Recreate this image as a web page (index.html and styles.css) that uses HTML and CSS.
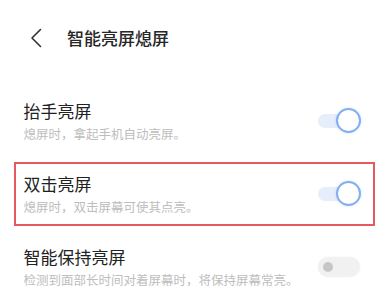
FILE: index.html
```html
<!DOCTYPE html>
<html lang="zh-CN">
<head>
<meta charset="utf-8">
<link rel="stylesheet" href="styles.css">
</head>
<body>
<div class="page">
  <header class="header">
    <svg class="back" width="12" height="20" viewBox="0 0 12 20"><path d="M10.5 1.5 L2 10 L10.5 18.5" fill="none" stroke="#333" stroke-width="1.6" stroke-linecap="round" stroke-linejoin="round"/></svg>
    <h1 class="title">智能亮屏熄屏</h1>
  </header>
  <div class="list">
    <div class="row">
      <div class="text">
        <div class="row-title">抬手亮屏</div>
        <div class="row-sub">熄屏时，拿起手机自动亮屏。</div>
      </div>
      <div class="toggle on"><span class="track"></span><span class="knob"></span></div>
    </div>
    <div class="row highlight">
      <div class="text">
        <div class="row-title">双击亮屏</div>
        <div class="row-sub">熄屏时，双击屏幕可使其点亮。</div>
      </div>
      <div class="toggle on"><span class="track"></span><span class="knob"></span></div>
    </div>
    <div class="row">
      <div class="text">
        <div class="row-title">智能保持亮屏</div>
        <div class="row-sub">检测到面部长时间对着屏幕时，将保持屏幕常亮。</div>
      </div>
      <div class="toggle off"><span class="track"></span><span class="dot"></span></div>
    </div>
  </div>
</div>
</body>
</html>
```
FILE: styles.css
```css
html, body {
  margin: 0;
  padding: 0;
  background: #ffffff;
}
body {
  font-family: "Noto Sans CJK SC", "Noto Sans", sans-serif;
  color: #222222;
}
.page {
  width: 389px;
  height: 305px;
  overflow: hidden;
}
.header {
  height: 76px;
  display: flex;
  align-items: center;
  padding-left: 30px;
}
.back {
  display: block;
}
.title {
  margin: 0 0 0 25px;
  font-size: 17px;
  font-weight: 500;
  line-height: 24px;
  color: #262626;
}
.list {
  margin-top: 13px;
  display: flex;
  flex-direction: column;
  gap: 9px;
}
.row {
  margin: 0 14px;
  height: 64px;
  box-sizing: border-box;
  border: 2.5px solid transparent;
  padding: 0 12px 0 7.5px;
  display: flex;
  align-items: center;
  justify-content: space-between;
}
.row.highlight {
  border-color: #e65a5f;
}
.row-title {
  font-size: 17px;
  line-height: 22px;
  color: #222222;
}
.row-sub {
  font-size: 12.5px;
  line-height: 18px;
  margin-top: 3px;
  color: #bdbdbd;
}
.toggle {
  position: relative;
  width: 43px;
  height: 26px;
  flex-shrink: 0;
}
.toggle.on .track {
  position: absolute;
  left: 0;
  top: 6px;
  width: 32px;
  height: 14px;
  border-radius: 7px;
  background: #e7eefb;
}
.toggle.on .knob {
  position: absolute;
  right: 0;
  top: 0;
  width: 25px;
  height: 25px;
  box-sizing: border-box;
  border-radius: 50%;
  border: 2.5px solid #84aef0;
  background: #ffffff;
  box-shadow: 0 0 3px rgba(132, 174, 240, 0.35);
}
.toggle.off .track {
  position: absolute;
  left: 0;
  top: 3px;
  width: 42px;
  height: 20px;
  border-radius: 10px;
  background: #f1f1f1;
  box-shadow: 0 0 2px rgba(0, 0, 0, 0.06);
}
.toggle.off .dot {
  position: absolute;
  left: 5px;
  top: 8px;
  width: 10px;
  height: 10px;
  border-radius: 50%;
  background: #c6c6c6;
}
```
